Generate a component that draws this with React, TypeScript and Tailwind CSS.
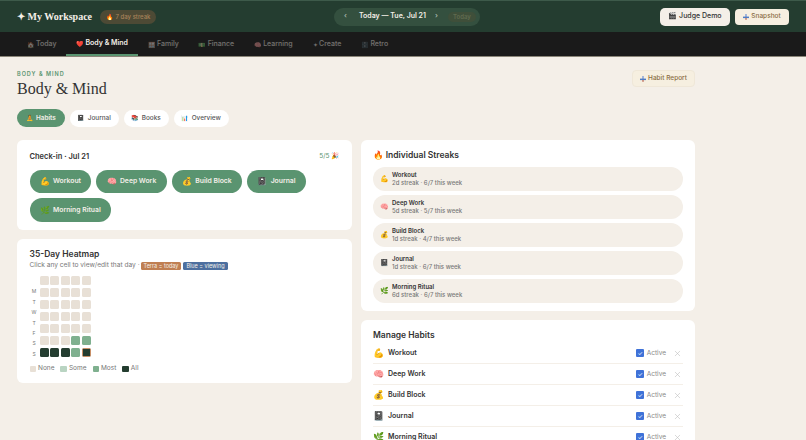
import { X } from "lucide-react";

const sans = "font-['Inter','Liberation_Sans','Noto_Color_Emoji',sans-serif]";

const navItems = [
  { icon: "🏠", label: "Today" },
  { icon: "❤️", label: "Body & Mind", active: true },
  { icon: "🪟", label: "Family" },
  { icon: "💵", label: "Finance" },
  { icon: "🧠", label: "Learning" },
  { icon: "✦", label: "Create" },
  { icon: "🗄️", label: "Retro" },
];

const tabs = [
  { icon: "🧘", label: "Habits", active: true },
  { icon: "📓", label: "Journal" },
  { icon: "📚", label: "Books" },
  { icon: "📊", label: "Overview" },
];

const habits = [
  { icon: "💪", name: "Workout", meta: "2d streak · 6/7 this week" },
  { icon: "🧠", name: "Deep Work", meta: "5d streak · 5/7 this week" },
  { icon: "💰", name: "Build Block", meta: "1d streak · 4/7 this week" },
  { icon: "📓", name: "Journal", meta: "1d streak · 6/7 this week" },
  { icon: "🌿", name: "Morning Ritual", meta: "6d streak · 6/7 this week" },
];

const dayLabels = ["M", "T", "W", "T", "F", "S", "S"];

const none = "bg-[#e8e0d6]";
const most = "bg-[#7fb08f]";
const all = "bg-[#243d30]";
const heatRows = [
  [none, none, none, none, none],
  [none, none, none, none, none],
  [none, none, none, none, none],
  [none, none, none, none, none],
  [none, none, none, none, none],
  [none, none, none, most, most],
  [all, all, all, most, all],
];

const legend = [
  { color: none, label: "None" },
  { color: "bg-[#b9d4c2]", label: "Some" },
  { color: most, label: "Most" },
  { color: all, label: "All" },
];

function ReportIcon() {
  return (
    <svg viewBox="0 0 6 6" className="w-[6px] h-[6px]">
      <rect x="2.2" y="0" width="1.6" height="3" fill="#8fa8d8" />
      <rect x="0" y="2.6" width="6" height="1.5" fill="#4f7cc4" />
      <rect x="2" y="4.1" width="2" height="1.6" fill="#c98a7a" />
    </svg>
  );
}

function Header() {
  return (
    <header className="h-[32px] flex items-center justify-between px-[17px] bg-[#243d30] border-t border-[#3d5a4a]">
      <div className="flex items-center gap-[8px] w-[137px]">
        <span className="font-['Liberation_Serif',serif] font-bold text-[10px] whitespace-nowrap text-[#f4efe8]">✦ My Workspace</span>
        <span className="h-[14px] px-[6px] flex items-center gap-[2px] rounded-full bg-[#4d4a35] text-[6px] font-medium whitespace-nowrap text-[#a8835a]">
          <span>🔥</span>7 day streak
        </span>
      </div>
      <div className="h-[18px] w-[146px] flex items-center rounded-full bg-[#34503f] pl-[10px] text-[7px] font-semibold whitespace-nowrap text-[#f4efe8]">
        <span className="w-[4px] text-[#a9b8ae]">‹</span>
        <span className="w-[65px] ml-[11px] text-center">Today — Tue, Jul 21</span>
        <span className="w-[4px] ml-[11px] text-[#a9b8ae]">›</span>
        <span className="ml-[9px] h-[10px] w-[28px] flex items-center justify-center rounded-full bg-[#3f4f3a] text-[6px] text-[#5f6b50]">Today</span>
      </div>
      <div className="flex items-center gap-[5px]">
        <span className="h-[18px] w-[70px] flex items-center justify-center gap-[2px] rounded-[5px] bg-[#f4efe8] text-[7px] font-medium text-[#333]">
          <span>🎬</span>Judge Demo
        </span>
        <span className="h-[16px] w-[54px] flex items-center justify-center gap-[2px] rounded-[4px] bg-[#f6efe0] text-[6.5px] font-medium text-[#8a6d45]">
          <ReportIcon />Snapshot
        </span>
      </div>
    </header>
  );
}

function Nav() {
  return (
    <nav className="h-[25px] flex items-stretch pl-[17px] bg-[#1a1a1a] border-b border-[#8a8578] text-[7px]">
      {navItems.map((item) => (
        <span
          key={item.label}
          className={`flex items-center px-[10px] gap-[1.5px] font-medium whitespace-nowrap text-[#f4efe8] ${
            item.active ? "font-semibold border-b-2 border-[#5a9470]" : "opacity-40"
          }`}
        >
          <span className="text-[6px]">{item.icon}</span>
          {item.label}
        </span>
      ))}
    </nav>
  );
}

function CheckIn() {
  return (
    <section className="h-[90px] bg-white rounded-[6px] px-[12.5px] pt-[11px]">
      <div className="flex items-center justify-between mb-[7px]">
        <h3 className="text-[7.5px] font-semibold text-[#333]">Check-in · Jul 21</h3>
        <span className="text-[6.5px] text-[#5a9470]">5/5 🎉</span>
      </div>
      <div className="flex flex-wrap gap-[5px]">
        {habits.map((h) => (
          <span
            key={h.name}
            className="h-[23.5px] px-[10.5px] flex items-center gap-[4px] rounded-full bg-[#5a9470] text-[6.8px] font-semibold whitespace-nowrap text-[#f4efe8]"
          >
            <span className="w-[9px] text-[8px]">{h.icon}</span>
            {h.name}
          </span>
        ))}
      </div>
    </section>
  );
}

function Heatmap() {
  return (
    <section className="h-[144px] bg-white rounded-[6px] px-[12.5px] pt-[9px]">
      <h3 className="text-[8.5px] font-semibold text-[#333]">35-Day Heatmap</h3>
      <div className="flex items-center gap-[1px] text-[6.6px] text-[#777] mb-[5px]">
        <span>Click any cell to view/edit that day ·</span>
        <span className="h-[8px] px-[3px] flex items-center rounded-[1.5px] bg-[#c07f52] text-[5.5px] text-[#f4efe8]">Terra = today</span>
        <span className="h-[8px] px-[3px] flex items-center rounded-[1.5px] ml-[1px] bg-[#4d6f9f] text-[5.5px] text-[#f4efe8]">Blue = viewing</span>
      </div>
      <div className="flex">
        <div className="w-[9px] mr-[1.5px] pt-[10.5px] flex flex-col">
          {dayLabels.map((d, i) => (
            <span key={i} className="h-[10.4px] leading-[10.4px] text-center text-[5px] text-[#777]">{d}</span>
          ))}
        </div>
        <div className="flex flex-col gap-[3px]">
          {heatRows.map((row, i) => (
            <div key={i} className="flex gap-[1.4px]">
              {row.map((cell, j) => (
                <span
                  key={j}
                  className={`w-[9px] h-[9px] rounded-[1.5px] ${cell} ${
                    i === 6 && j === 4 ? "border-[1.5px] border-[#c98f66]" : ""
                  }`}
                />
              ))}
            </div>
          ))}
        </div>
      </div>
      <div className="flex items-center gap-[6px] mt-[5px] text-[6.5px] text-[#777]">
        {legend.map((l) => (
          <span key={l.label} className="flex items-center gap-[2px]">
            <span className={`w-[6.5px] h-[6.5px] rounded-[1px] ${l.color}`} />
            {l.label}
          </span>
        ))}
      </div>
    </section>
  );
}

function Streaks() {
  return (
    <section className="h-[171px] bg-white rounded-[6px] px-[12px] pt-[9px]">
      <h3 className="text-[8.5px] font-semibold text-[#333] mb-[5px]">🔥 Individual Streaks</h3>
      <div className="flex flex-col gap-[4.5px]">
        {habits.map((h) => (
          <div key={h.name} className="h-[23.5px] flex items-center gap-[3px] pl-[7px] rounded-full bg-[#f4efe8]">
            <span className="w-[9px] text-[7px]">{h.icon}</span>
            <div className="leading-[8px]">
              <div className="text-[6px] font-semibold text-[#333]">{h.name}</div>
              <div className="text-[6px] font-medium text-[#777]">{h.meta}</div>
            </div>
          </div>
        ))}
      </div>
    </section>
  );
}

function ManageHabits() {
  return (
    <section className="bg-white rounded-[6px] px-[12px] pt-[9px]">
      <h3 className="text-[8.5px] font-semibold text-[#333] mb-[1px]">Manage Habits</h3>
      {habits.map((h) => (
        <div key={h.name} className="h-[21px] flex items-center border-b border-[#f4efe8]">
          <span className="w-[15px] text-[9px]">{h.icon}</span>
          <span className="flex-1 text-[7px] font-semibold text-[#333]">{h.name}</span>
          <span className="w-[7.5px] h-[7.5px] rounded-[1px] bg-[#3f72d8] flex items-center justify-center text-[6px] text-white">✓</span>
          <span className="ml-[3px] text-[6.5px] leading-[8px] text-[#888]">Active</span>
          <X className="ml-[7px] mr-[1px] w-[9px] h-[9px] text-[#bbb]" strokeWidth={1.5} />
        </div>
      ))}
    </section>
  );
}

export default function App() {
  return (
    <div className={`h-[440px] overflow-hidden bg-[#f4efe8] ${sans}`}>
      <Header />
      <Nav />
      <main className="w-[678px] ml-[17px] pt-[13px]">
        <div className="flex items-start justify-between">
          <div>
            <div className="text-[5.5px] font-semibold tracking-[1px] text-[#5a9470]">BODY &amp; MIND</div>
            <h1 className="mt-[1px] font-['Liberation_Serif',serif] text-[16px] leading-[20px] text-[#333]">Body &amp; Mind</h1>
          </div>
          <span className="h-[17px] w-[63px] flex items-center justify-center gap-[2px] rounded-[4px] bg-[#f6efe0] border border-[#efe7d8] text-[6.5px] font-medium text-[#8a6d45]">
            <ReportIcon />Habit Report
          </span>
        </div>
        <div className="flex items-center gap-[5px] mt-[10px]">
          {tabs.map((t) => (
            <span
              key={t.label}
              className={`flex items-center gap-[2.5px] rounded-full font-medium text-[6.4px] leading-[8px] ${
                t.active ? "h-[18px] px-[9px] bg-[#5a9470] font-semibold text-[#f4efe8]" : "h-[17px] px-[8px] bg-white text-[#555]"
              }`}
            >
              <span className="text-[6px]">{t.icon}</span>
              {t.label}
            </span>
          ))}
        </div>
        <div className="grid grid-cols-[335px_334px] gap-x-[9px] mt-[13px] items-start">
          <div className="flex flex-col gap-[9px]">
            <CheckIn />
            <Heatmap />
          </div>
          <div className="flex flex-col gap-[9px]">
            <Streaks />
            <ManageHabits />
          </div>
        </div>
      </main>
    </div>
  );
}
